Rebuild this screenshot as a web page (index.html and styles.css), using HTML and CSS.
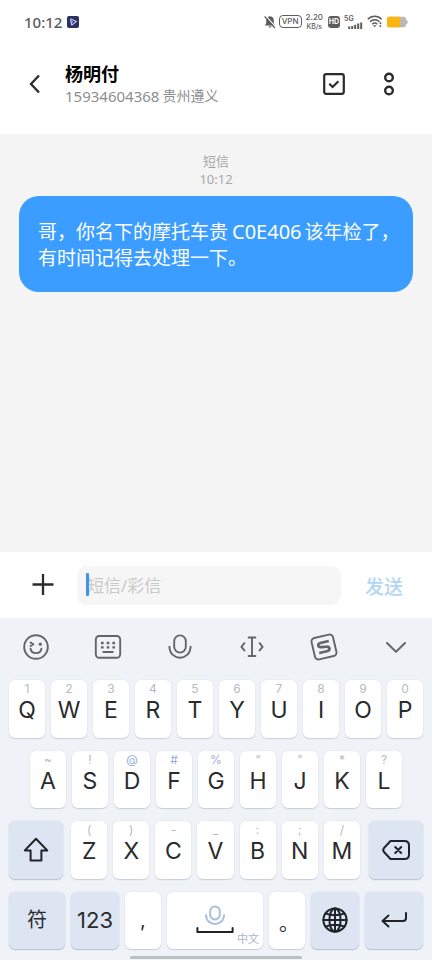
FILE: index.html
```html
<!DOCTYPE html>
<html lang="zh-CN">
<head>
<meta charset="utf-8">
<meta name="viewport" content="width=device-width, initial-scale=1">
<title>杨明付</title>
<link rel="stylesheet" href="styles.css">
</head>
<body>
<div class="status">
  <span class="clock">10:12</span>
  <svg class="app-badge" width="12" height="12" viewBox="0 0 12 12"><rect width="12" height="12" rx="2" fill="#2d2f5e"/><path d="M3.5 2.8 9.3 5.4 4.6 9.2M3.5 2.8 4.6 9.2M3.6 5.2 6 6" fill="none" stroke="#b9bfee" stroke-width="1.2"/></svg>
  <div class="status-right">
    <svg class="bell" width="12" height="14" viewBox="0 0 12 14"><path d="M6 1.2C3.4 1.4 2.2 3.2 2.2 5.4V8.4L.8 10.6H11.2L9.8 8.4V5.4C9.8 3.2 8.6 1.4 6 1.2ZM4.4 11.3H7.6L6 13Z" fill="#5c5c5c"/><path d="M1.8 .8 11.8 12.2" stroke="#fff" stroke-width="1.2"/><path d="M.6 1.4 10.8 13" stroke="#5c5c5c" stroke-width="1.3"/></svg>
    <span class="vpn">VPN</span>
    <span class="speed"><b>2.20</b><span>KB/s</span></span>
    <span class="hd">HD</span>
    <span class="signal"><span>5G</span><svg width="15" height="7" viewBox="0 0 15 7"><path d="M1.2 7V4.5M4.2 7V4M7.2 7V2.8M10.2 7V1.6M13.2 7V.5" stroke="#5c5c5c" stroke-width="2"/></svg></span>
    <svg class="wifi" width="16" height="13" viewBox="0 0 16 13"><g fill="none" stroke="#5c5c5c" stroke-width="1.5"><path d="M.8 4.2C4.8.2 10.8.2 14.6 4.2M3 6.8C5.8 4 9.8 4 12.4 6.8M5.2 9.2C6.8 7.6 8.8 7.6 10.2 9.2"/></g><path d="M6 10.3H9.4L7.7 12.3Z" fill="#5c5c5c"/><path d="M13.4 7.2V9M13.4 10.2V12" stroke="#5c5c5c" stroke-width="1.6"/></svg>
    <svg width="21" height="12" viewBox="0 0 21 12"><path d="M2 .8H17Q19 .8 19 3V3.8Q20.8 4 20.8 6T19 8.2V9Q19 11.2 17 11.2H2Q0 11.2 0 9V3Q0 .8 2 .8Z" fill="#b9b9bb"/><path d="M2 .8H13.2V11.2H2Q0 11.2 0 9V3Q0 .8 2 .8Z" fill="#fcb50c"/></svg>
  </div>
</div>

<header class="header">
  <button class="icon-btn back" aria-label="返回"><svg width="14" height="20" viewBox="0 0 14 20"><path d="M11 1.5 3 10l8 8.5" fill="none" stroke="#2b2b2b" stroke-width="2.3"/></svg></button>
  <div class="contact">
    <h1>杨明付</h1>
    <p><span class="phone">15934604368</span><span>贵州遵义</span></p>
  </div>
  <button class="icon-btn" aria-label="选择"><svg width="22" height="22" viewBox="0 0 22 22"><rect x="1.2" y="1.2" width="19.6" height="19.6" rx="2" fill="none" stroke="#2b2b2b" stroke-width="2.2"/><path d="M6.3 10.8 9.6 14 15.4 8.2" fill="none" stroke="#2b2b2b" stroke-width="2.2"/></svg></button>
  <button class="icon-btn more" aria-label="更多"><svg width="12" height="24" viewBox="0 0 12 24"><g fill="none" stroke="#2b2b2b" stroke-width="2.4"><circle cx="6" cy="5.5" r="3.8"/><circle cx="6" cy="18.5" r="3.8"/></g></svg></button>
</header>

<main class="thread">
  <p class="stamp">短信<br>10:12</p>
  <div class="bubble">哥，你名下的摩托车贵<span class="plate">C0E406</span>该年检了，<br>有时间记得去处理一下。</div>
</main>

<form class="composer">
  <button type="button" class="icon-btn plus" aria-label="添加"><svg width="24" height="24" viewBox="0 0 24 24"><path d="M12 1V22M1.5 11.5H22.5" stroke="#2b2b2b" stroke-width="2.3"/></svg></button>
  <div class="field">
    <input type="text" aria-label="短信/彩信" placeholder="短信/彩信">
    <span class="caret"></span>
  </div>
  <button type="button" class="send">发送</button>
</form>

<section class="keyboard">
  <div class="tools">
    <button aria-label="表情"><svg width="28" height="28" viewBox="0 0 28 28"><circle cx="14" cy="14" r="11.8"/><path d="M8.6 9.6 11.4 11.3 8.6 13M8.6 15.6C9.2 21.6 18.8 21.6 19.4 15.6"/><circle cx="18.3" cy="11.2" r="1.6" class="dot"/></svg></button>
    <button aria-label="键盘"><svg width="28" height="28" viewBox="0 0 28 28"><rect x="1.8" y="3" width="24.4" height="21.8" rx="3.5"/><path d="M9.3 19H18.8"/><path class="dot" d="M7 8.8h2.6v2.4H7zM12.7 8.8h2.6v2.4h-2.6zM18.4 8.8H21v2.4h-2.6zM7 13.2h2.6v2.4H7zM12.7 13.2h2.6v2.4h-2.6zM18.4 13.2H21v2.4h-2.6z"/></svg></button>
    <button aria-label="语音"><svg width="28" height="28" viewBox="0 0 28 28"><rect x="8.2" y="2.4" width="11.6" height="17.2" rx="5.8"/><path d="M3.4 13.6C4 28.4 24 28.4 24.6 13.6"/></svg></button>
    <button aria-label="移动光标"><svg width="28" height="28" viewBox="0 0 28 28"><path d="M10.6 4.5H17.4M14 4.5V23M10.6 23H17.4M6.4 10.2 3.4 13.8 6.4 17.4M21.6 10.2 24.6 13.8 21.6 17.4"/></svg></button>
    <button aria-label="输入法"><svg width="28" height="28" viewBox="0 0 28 28"><g transform="rotate(-13 14 14)"><rect x="3" y="3" width="22" height="22" rx="3.5"/><path stroke-width="2.7" stroke-linecap="butt" d="M20 9.2H12.3C7.6 9.2 7.8 13.2 11.8 13.6L16 14.2C20.2 14.8 19.8 18.8 15.8 18.8H8"/></g></svg></button>
    <button aria-label="收起"><svg width="28" height="28" viewBox="0 0 28 28"><path d="M5 10 14 18.8 23 10"/></svg></button>
  </div>

  <div class="keys">
    <div class="row">
      <button class="key"><small>1</small>Q</button><button class="key"><small>2</small>W</button><button class="key"><small>3</small>E</button><button class="key"><small>4</small>R</button><button class="key"><small>5</small>T</button><button class="key"><small>6</small>Y</button><button class="key"><small>7</small>U</button><button class="key"><small>8</small>I</button><button class="key"><small>9</small>O</button><button class="key"><small>0</small>P</button>
    </div>
    <div class="row inset">
      <button class="key"><small>~</small>A</button><button class="key"><small>!</small>S</button><button class="key"><small class="blue">@</small>D</button><button class="key"><small class="blue">#</small>F</button><button class="key"><small class="blue">%</small>G</button><button class="key"><small>“</small>H</button><button class="key"><small>”</small>J</button><button class="key"><small>*</small>K</button><button class="key"><small>?</small>L</button>
    </div>
    <div class="row letters">
      <button class="key mod" aria-label="大写"><svg width="26" height="26" viewBox="0 0 26 26"><path d="M13 1.8 1.8 13.4H7.6V23.4H18.4V13.4H24.2Z"/></svg></button>
      <button class="key"><small>(</small>Z</button><button class="key"><small>)</small>X</button><button class="key"><small>-</small>C</button><button class="key"><small>_</small>V</button><button class="key"><small>:</small>B</button><button class="key"><small>;</small>N</button><button class="key"><small>/</small>M</button>
      <button class="key mod" aria-label="删除"><svg width="30" height="22" viewBox="0 0 30 22"><path d="M9.5 2H23.5Q28 2 28 6.5V15.5Q28 20 23.5 20H9.5L3 13Q1.4 11 3 9ZM14.2 8 20.2 14M20.2 8 14.2 14"/></svg></button>
    </div>
    <div class="row bottom">
      <button class="key mod cjk">符</button>
      <button class="key mod">123</button>
      <button class="key punct">,</button>
      <button class="key space" aria-label="空格"><svg width="38" height="32" viewBox="0 0 38 32"><g stroke="#a9bfdd"><rect x="14.2" y="2.4" width="9.6" height="13" rx="4.8"/><path d="M10 11.2C10.4 23 27.6 23 28 11.2"/></g><path d="M1.4 24V28H36.6V24"/></svg><span class="lang">中文</span></button>
      <button class="key punct stop">。</button>
      <button class="key mod" aria-label="切换语言"><svg width="28" height="28" viewBox="0 0 28 28"><circle cx="14" cy="14" r="11.6"/><ellipse cx="14" cy="14" rx="5.6" ry="11.6"/><path d="M14 2.4V25.6M2.4 14H25.6M4.6 7.4C10 9.8 18 9.8 23.4 7.4M4.6 20.6C10 18.2 18 18.2 23.4 20.6"/></svg></button>
      <button class="key mod" aria-label="换行"><svg width="28" height="18" viewBox="0 0 28 18"><path d="M26 2V7Q26 10 23 10H3M8.5 4.5 2.5 10 8.5 15.5"/></svg></button>
    </div>
  </div>
  <div class="home-bar"></div>
</section>
</body>
</html>
```
FILE: styles.css
```css
* { box-sizing: border-box; }

body {
  margin: 0;
  min-height: 100vh;
  display: flex;
  flex-direction: column;
  background: #fff;
  font-family: "Noto Sans", "Noto Sans CJK SC", sans-serif;
}

button {
  padding: 0;
  border: 0;
  background: none;
  font: inherit;
  color: inherit;
}

svg { display: block; flex: none; }

h1, p { margin: 0; }

/* Status bar */
.status {
  display: flex;
  align-items: center;
  height: 43px;
  padding: 0 24px;
  color: #5c5c5c;
}

.clock { font-size: 15px; font-weight: 500; }
.app-badge { margin-left: 5px; }

.status-right {
  display: flex;
  align-items: center;
  margin-left: auto;
  font-family: Inter, sans-serif;
}

.vpn {
  margin-left: 3px;
  padding: 0 2px;
  border: 1px solid #5c5c5c;
  border-radius: 4px;
  font-size: 8px;
  font-weight: 500;
  line-height: 11px;
}

.speed {
  display: flex;
  flex-direction: column;
  align-items: center;
  margin-left: 4px;
  font-size: 8px;
  line-height: 9px;
}

.speed b { font-weight: 500; }
.speed span { font-size: 7px; font-weight: 500; }

.hd {
  margin-left: 5px;
  width: 12px;
  border-radius: 3px;
  background: #5c5c5c;
  color: #fff;
  font-size: 7px;
  font-weight: 700;
  line-height: 12px;
  text-align: center;
}

.signal {
  display: flex;
  flex-direction: column;
  margin-left: 4px;
  font-size: 7px;
  font-weight: 600;
  line-height: 7px;
}

.signal svg { margin-left: 4px; }
.wifi { margin-left: 4px; }
.wifi + svg { margin-left: 4px; }

/* Header */
.header {
  display: flex;
  align-items: center;
  height: 91px;
  padding: 0 33px 10px 28px;
}

.icon-btn {
  display: flex;
  align-items: center;
  justify-content: center;
}

.contact {
  flex: 1;
  margin-left: 23px;
}

.contact h1 {
  color: #000;
  font-size: 18px;
  font-weight: 700;
  line-height: 24px;
}

.contact p {
  display: flex;
  align-items: center;
  gap: 3px;
  color: #8e8e8e;
  font-size: 14px;
  line-height: 20px;
}

.phone { font-size: 15px; }
.more { margin-left: 34px; width: 20px; }

/* Conversation */
.thread {
  flex: 1;
  padding: 18px 19px;
  background: #f4f4f4;
}

.stamp {
  color: #a8a8a8;
  font-size: 13px;
  line-height: 18px;
  text-align: center;
}

.bubble {
  margin-top: 8px;
  padding: 23px 19px 21px;
  border-radius: 20px;
  background: #3a9dff;
  color: #fff;
  font-size: 19px;
  line-height: 26px;
  white-space: nowrap;
}

.plate {
  margin: 0 3px 0 4px;
  font-size: 20px;
}

/* Composer */
.composer {
  display: flex;
  align-items: center;
  height: 66px;
  padding: 0 29px 0 31px;
}

.field {
  position: relative;
  flex: 1;
  margin: 0 24px 0 22px;
}

.field input {
  display: block;
  width: 100%;
  height: 39px;
  padding: 0 10px;
  border: 0;
  border-radius: 9px;
  outline: 0;
  background: #f6f6f6;
  font: 17px "Noto Sans", "Noto Sans CJK SC", sans-serif;
  color: #222;
}

.field input::placeholder { color: #cacaca; opacity: 1; }

.caret {
  position: absolute;
  top: 7px;
  left: 9px;
  width: 3px;
  height: 23px;
  border-radius: 1px;
  background: #3d93f0;
}

.send {
  padding-top: 2px;
  color: #b2d5f6;
  font-size: 19px;
  font-weight: 500;
}

/* Keyboard */
.keyboard { background: #eff2f7; }

.tools {
  display: grid;
  grid-template-columns: repeat(6, 1fr);
  height: 58px;
}

.tools button {
  display: flex;
  align-items: center;
  justify-content: center;
}

.tools svg {
  fill: none;
  stroke: #626669;
  stroke-width: 1.9;
  stroke-linecap: round;
  stroke-linejoin: round;
}

.tools .dot { fill: #626669; stroke: none; }

.keys {
  display: grid;
  grid-template-rows: repeat(4, 1fr);
  gap: 13px;
  height: 273px;
  padding: 4px 9px 0;
}

.row {
  display: grid;
  grid-template-columns: repeat(10, 1fr);
  gap: 6px;
}

.row.inset {
  grid-template-columns: repeat(9, 1fr);
  padding: 0 21px;
}

.row.letters { grid-template-columns: 56fr repeat(7, 36fr) 57fr; }
.row.letters .mod:first-child { margin-right: 2px; }
.row.letters .mod:last-child { margin-left: 3px; }
.row.bottom { grid-template-columns: 56fr 48fr 36fr 96fr 36fr 48fr 58fr; }

.key {
  display: flex;
  flex-direction: column;
  align-items: center;
  padding-top: 2px;
  min-width: 0;
  border-radius: 6px;
  background: #fff;
  box-shadow: 0 1px 1px #c9cfdb, 0 0 2px #dfe3ec;
  color: #2a2b2d;
  font-family: Inter, "Noto Sans CJK SC", sans-serif;
  font-size: 23px;
  line-height: 28px;
}

.key small {
  color: #b3bac8;
  font-size: 12px;
  line-height: 14px;
}

.key .blue { color: #96afdb; }

.key svg {
  fill: none;
  stroke: #202328;
  stroke-width: 2;
  stroke-linejoin: round;
  stroke-linecap: round;
}

.mod, .bottom .key {
  justify-content: center;
  padding: 0;
}

.mod {
  background: #dde5f3;
  box-shadow: 0 1px 1px #b7c2d6, 0 0 2px #d3dbe9;
  font-size: 22px;
}

.cjk { font-size: 20px; }
.punct { font-size: 20px; }
.bottom .stop { padding: 8px 0 0 4px; }
.space { position: relative; }

.lang {
  position: absolute;
  right: 4px;
  bottom: 3px;
  color: #a9b7d0;
  font-size: 11px;
  line-height: 14px;
}

.home-bar {
  width: 40%;
  height: 3px;
  margin: 7px auto 1px;
  border-radius: 2px;
  background: #b9c3c2;
}
```
